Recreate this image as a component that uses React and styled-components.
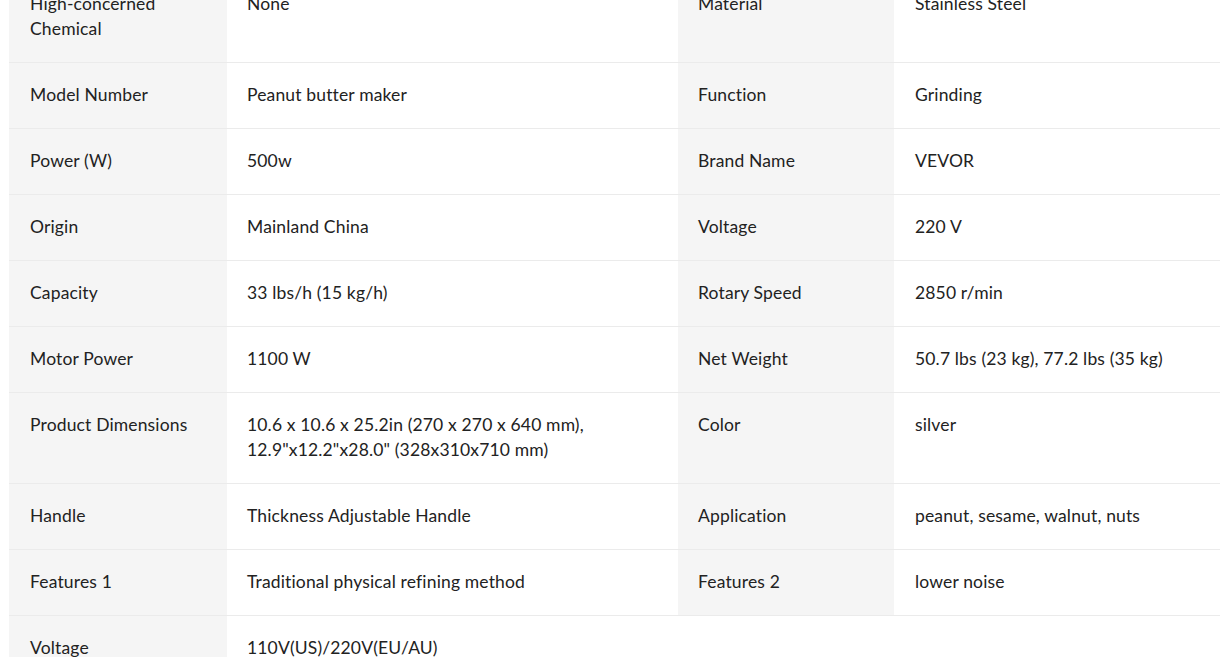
import React from "react";
import styled, { createGlobalStyle } from "styled-components";

const Global = createGlobalStyle`
  html, body { margin: 0; padding: 0; background: #fff; overflow: hidden; }
  body { font-family: Lato, "Open Sans", sans-serif; color: #222; }
`;

const Page = styled.div`
  padding-left: 9px;
  margin-top: -28px;
`;

const Table = styled.div`
  display: grid;
  grid-template-columns: 218px 451px 216px 1fr;
`;

const Cell = styled.div`
  padding: 19px 20px 21px ${(p) => (p.$edge ? "21px" : "20px")};
  font-size: 17.5px;
  letter-spacing: 0.15px;
  line-height: 25px;
  color: #222;
  background: ${(p) => (p.$label ? "#f5f5f5" : "#fff")};
  border-bottom: 1px solid ${(p) => (p.$last ? "transparent" : "#ebebeb")};
  min-height: 25px;
`;

const rows = [
  ["High-concerned Chemical", "None", "Material", "Stainless Steel"],
  ["Model Number", "Peanut butter maker", "Function", "Grinding"],
  ["Power (W)", "500w", "Brand Name", "VEVOR"],
  ["Origin", "Mainland China", "Voltage", "220 V"],
  ["Capacity", "33 lbs/h (15 kg/h)", "Rotary Speed", "2850 r/min"],
  ["Motor Power", "1100 W", "Net Weight", "50.7 lbs (23 kg), 77.2 lbs (35 kg)"],
  [
    "Product Dimensions",
    <>
      10.6 x 10.6 x 25.2in (270 x 270 x 640 mm),
      <br />
      12.9"x12.2"x28.0" (328x310x710 mm)
    </>,
    "Color",
    "silver",
  ],
  ["Handle", "Thickness Adjustable Handle", "Application", "peanut, sesame, walnut, nuts"],
  ["Features 1", "Traditional physical refining method", "Features 2", "lower noise"],
  ["Voltage", "110V(US)/220V(EU/AU)", null, null],
];

export default function App() {
  return (
    <>
      <Global />
      <Page>
        <Table>
          {rows.map((r, i) => {
            const last = r[2] === null;
            return (
              <React.Fragment key={i}>
                <Cell $label $edge>{r[0]}</Cell>
                <Cell>{r[1]}</Cell>
                <Cell $label={!last} $last={last}>{r[2]}</Cell>
                <Cell $edge $last={last}>{r[3]}</Cell>
              </React.Fragment>
            );
          })}
        </Table>
      </Page>
    </>
  );
}
